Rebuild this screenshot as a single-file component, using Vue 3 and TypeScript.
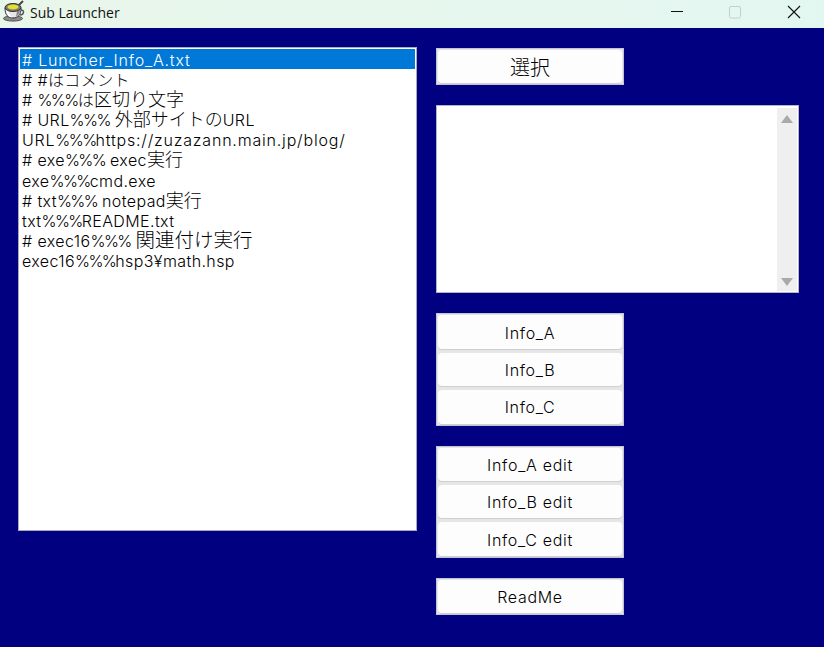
<script setup lang="ts">
interface Seg { t: string; k?: 'kanji' | 'big' | 'pct' | 'wide' }
const P: Seg = { t: '%%%', k: 'pct' }
const lines: Seg[][] = [
  [{ t: '# Luncher_Info_A.txt', k: 'wide' }],
  [{ t: '# #はコメント' }],
  [{ t: '# ' }, P, { t: 'は' }, { t: '区切り文字', k: 'kanji' }],
  [{ t: '# URL' }, P, { t: ' ' }, { t: '外部サイトの', k: 'kanji' }, { t: 'URL' }],
  [{ t: 'URL', k: 'wide' }, P, { t: 'https://zuzazann.main.jp/blog/', k: 'wide' }],
  [{ t: '# exe' }, P, { t: ' exec' }, { t: '実行', k: 'kanji' }],
  [{ t: 'exe' }, P, { t: 'cmd.exe' }],
  [{ t: '# txt' }, P, { t: ' notepad' }, { t: '実行', k: 'kanji' }],
  [{ t: 'txt' }, P, { t: 'README.txt' }],
  [{ t: '# exec16' }, P, { t: ' ' }, { t: '関連付け実行', k: 'big' }],
  [{ t: 'exec16' }, P, { t: 'hsp3¥math.hsp' }],
]
const infos: string[] = ['Info_A', 'Info_B', 'Info_C']
const edits: string[] = ['Info_A edit', 'Info_B edit', 'Info_C edit']
</script>

<template>
  <div class="window">
    <header class="titlebar">
      <svg class="appicon" width="22" height="22" viewBox="0 0 22 22">
        <path d="M16 5 L20 1" stroke="#444" stroke-width="2" />
        <path d="M18 10 C22 10 21 15 17 15" fill="none" stroke="#555" stroke-width="1.4" />
        <ellipse cx="10" cy="18.5" rx="9.5" ry="2.6" fill="#8c8c8c" stroke="#333" stroke-width="0.8" />
        <path d="M2 8 C2 15 5 18 10 18 C15 18 18 15 18 8 Z" fill="#e6e6e6" stroke="#333" />
        <path d="M3 10 C4 15 6 17 9 17.5 C6 14 5 12 5 10 Z" fill="#fff" />
        <path d="M13 17 C16 15 17 12 17 10 L14 11 Z" fill="#888" />
        <ellipse cx="10" cy="7.5" rx="8" ry="4" fill="#777" stroke="#333" />
        <ellipse cx="10" cy="7" rx="5.5" ry="2.6" fill="#e4e02c" />
      </svg>
      <span class="title">Sub Launcher</span>
      <div class="controls">
        <svg width="12" height="12" viewBox="0 0 12 12"><path d="M0 5.5H12" stroke="#111" stroke-width="1" /></svg>
        <svg width="12" height="13" viewBox="0 0 12 13"><rect x="0.5" y="0.5" width="11" height="11.5" rx="1.5" fill="none" stroke="#c4d0cd" /></svg>
        <svg width="14" height="14" viewBox="0 0 14 14"><path d="M1 1L13 13M13 1L1 13" stroke="#111" stroke-width="1.1" /></svg>
      </div>
    </header>
    <main class="client">
      <ul class="list">
        <li v-for="(line, i) in lines" :key="i" :class="{ selected: i === 0 }">
          <span v-for="(s, j) in line" :key="j" :class="s.k">{{ s.t }}</span>
        </li>
      </ul>
      <div class="side">
        <button class="btn select"><span class="face">選択</span></button>
        <div class="memo">
          <div class="scrollbar">
            <span class="arrow up"></span>
            <span class="arrow down"></span>
          </div>
        </div>
        <div class="group">
          <button v-for="b in infos" :key="b" class="btn"><span class="face">{{ b }}</span></button>
        </div>
        <div class="group">
          <button v-for="b in edits" :key="b" class="btn"><span class="face">{{ b }}</span></button>
        </div>
        <button class="btn"><span class="face">ReadMe</span></button>
      </div>
    </main>
  </div>
</template>

<style>
html, body { margin: 0; background: #000080; }
</style>

<style scoped>
.window {
  width: 824px;
  height: 647px;
  display: flex;
  flex-direction: column;
  overflow: hidden;
  font-family: Inter, "Noto Sans CJK JP", sans-serif;
  font-weight: 300;
  color: #000;
}
.titlebar {
  height: 28px;
  flex: none;
  display: flex;
  align-items: center;
  background: linear-gradient(90deg, #e9f6ea, #e3f7f1);
  font-family: "Open Sans", "Noto Sans", sans-serif;
  font-weight: 400;
  font-size: 14px;
  box-sizing: border-box;
}
.appicon { margin-left: 3px; margin-bottom: 6px; }
.title { margin-left: 5px; margin-bottom: 3px; color: #111; }
.controls {
  margin-left: auto;
  display: flex;
  align-items: center;
  gap: 46px;
  padding-right: 23px;
  margin-bottom: 4px;
}
.client {
  flex: 1;
  background: #000080;
  display: flex;
  align-items: flex-start;
  padding: 19px 0 0 18px;
}
.list {
  width: 399px;
  height: 484px;
  box-sizing: border-box;
  margin: 0;
  padding: 1px;
  list-style: none;
  background: #fff;
  border: 1px solid #a9a9b8;
  font-size: 16px;
  letter-spacing: 0.4px;
}
.list li {
  height: 20.1px;
  line-height: 22px;
  padding-left: 2px;
  white-space: nowrap;
}
.list li.selected {
  background: #0078d7;
  color: #fff;
}
.kanji { font-size: 18px; line-height: 18px; letter-spacing: 0; }
.big { font-size: 19.5px; line-height: 18px; letter-spacing: 0; }
.pct { letter-spacing: -1.6px; }
.wide { letter-spacing: 0.8px; }
.side {
  margin-left: 19px;
  display: flex;
  flex-direction: column;
  align-items: flex-start;
  padding-top: 1px;
}
.btn {
  width: 188px;
  height: 37.4px;
  flex: none;
  box-sizing: border-box;
  display: block;
  padding: 2px;
  background: #e6e6e8;
  border: 0;
  box-shadow: inset 1px 0 0 #c4c4d6, inset -1px 0 0 #c4c4d6, inset 0 1px 0 #c4c4d6, inset 0 -1px 0 #c4c4d6;
  font: inherit;
  font-size: 16px;
  letter-spacing: 0.7px;
  color: #000;
}
.group .btn { box-shadow: inset 1px 0 0 #c4c4d6, inset -1px 0 0 #c4c4d6; }
.group .btn:first-child { box-shadow: inset 1px 0 0 #c4c4d6, inset -1px 0 0 #c4c4d6, inset 0 1px 0 #c4c4d6; }
.group .btn:last-child { box-shadow: inset 1px 0 0 #c4c4d6, inset -1px 0 0 #c4c4d6, inset 0 -1px 0 #c4c4d6; }
.face {
  display: flex;
  height: 100%;
  align-items: center;
  justify-content: center;
  padding-top: 1px;
  box-sizing: border-box;
  background: #fdfdfd;
  border-radius: 4px;
  box-shadow: 0 1px 0 #cfcfd2;
}
.select { font-size: 20px; letter-spacing: 0; }
.select .face { padding-top: 0; }
.memo {
  width: 363px;
  height: 188px;
  margin-top: 20px;
  box-sizing: border-box;
  background: #fff;
  border: 1px solid #b4b4c4;
  display: flex;
  justify-content: flex-end;
  padding: 2px 1px 1px 0;
}
.scrollbar {
  width: 20px;
  background: #efefef;
  display: flex;
  flex-direction: column;
  justify-content: space-between;
  align-items: center;
  padding: 7px 0 5px;
}
.arrow { width: 0; height: 0; border-left: 6px solid transparent; border-right: 6px solid transparent; }
.up { border-bottom: 8px solid #a9a9a9; }
.down { border-top: 8px solid #a9a9a9; }
.group {
  margin-top: 20px;
  display: flex;
  flex-direction: column;
}
.group + .btn { margin-top: 20px; }
</style>
